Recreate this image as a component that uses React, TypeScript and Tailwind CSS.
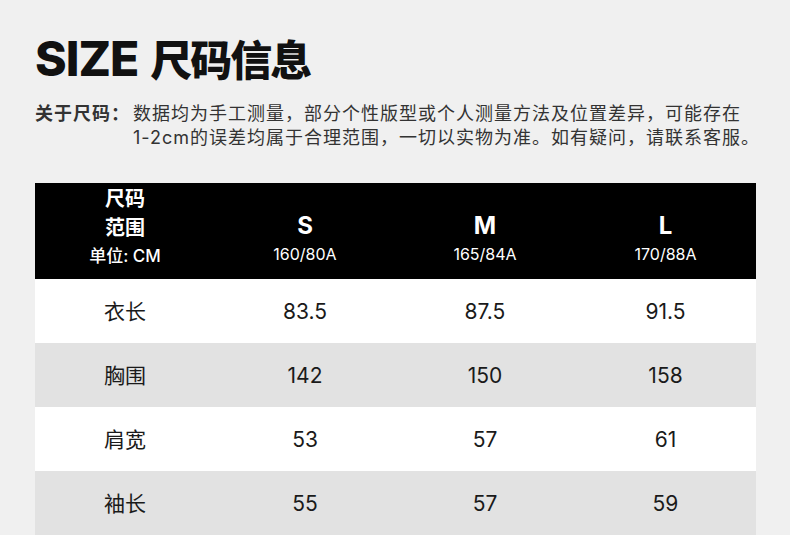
import React from "react";

const rows = [
  { label: "衣长", v: ["83.5", "87.5", "91.5"], bg: "bg-white" },
  { label: "胸围", v: ["142", "150", "158"], bg: "bg-[#e2e2e2]" },
  { label: "肩宽", v: ["53", "57", "61"], bg: "bg-white" },
  { label: "袖长", v: ["55", "57", "59"], bg: "bg-[#e2e2e2]" },
];

const sizes = [
  { s: "S", r: "160/80A" },
  { s: "M", r: "165/84A" },
  { s: "L", r: "170/88A" },
];

const font = { fontFamily: 'Inter, "Noto Sans CJK SC", sans-serif' };

export default function App() {
  return (
    <div className="w-[790px] h-[535px] bg-[#f0f0f0] overflow-hidden" style={font}>
      <div className="pl-[35px] pt-[35px]">
        <h1 className="h-[48px] leading-[48px] font-extrabold text-[#111] whitespace-nowrap flex items-baseline">
          <span className="text-[48px] tracking-[-1px]">SIZE</span>
          <span className="text-[42px] tracking-[-2px] ml-[12px]">尺码信息</span>
        </h1>
        <div className="mt-[19px] flex text-[18px] leading-[24px] text-[#333] tracking-[1px] whitespace-nowrap">
          <div className="font-bold shrink-0 w-[98px]">关于尺码：</div>
          <div>
            数据均为手工测量，部分个性版型或个人测量方法及位置差异，可能存在
            <br />
            1-2cm的误差均属于合理范围，一切以实物为准。如有疑问，请联系客服。
          </div>
        </div>
      </div>
      <div className="ml-[35px] mt-[33px] w-[721px]">
        <div className="h-[96px] bg-black text-white grid grid-cols-[180px_180px_180px_181px]">
          <div className="flex flex-col items-center justify-center pb-[8px]">
            <div className="text-[20px] leading-[29px] font-bold">尺码</div>
            <div className="text-[20px] leading-[29px] font-bold">范围</div>
            <div className="text-[17px] leading-[26px] font-medium">单位: CM</div>
          </div>
          {sizes.map((z) => (
            <div key={z.s} className="flex flex-col items-center justify-end pb-[12px]">
              <div className="text-[24px] leading-[30px] font-bold">{z.s}</div>
              <div className="text-[16px] leading-[26px]">{z.r}</div>
            </div>
          ))}
        </div>
        {rows.map((r) => (
          <div key={r.label} className={`h-[64px] grid grid-cols-[180px_180px_180px_181px] items-center text-[21px] text-[#1a1a1a] pt-[2px] ${r.bg}`}>
            <div className="text-center">{r.label}</div>
            {r.v.map((x, i) => (
              <div key={i} className="text-center">{x}</div>
            ))}
          </div>
        ))}
      </div>
    </div>
  );
}
